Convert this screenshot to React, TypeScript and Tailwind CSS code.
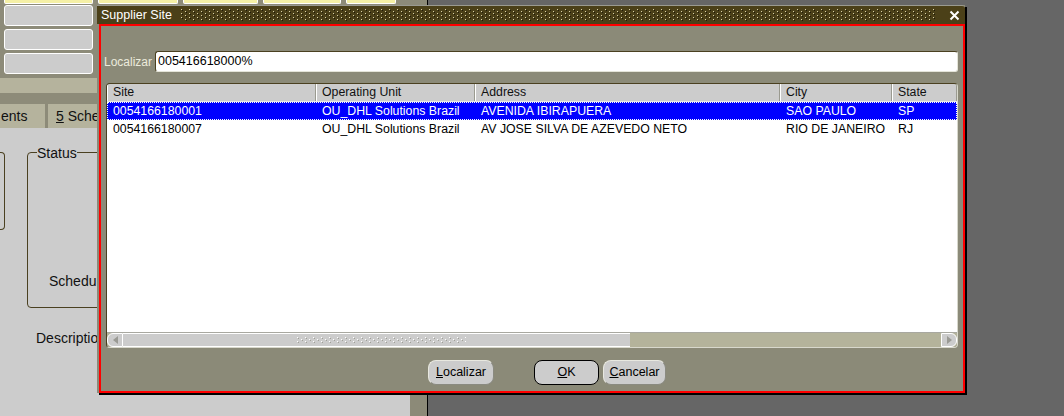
import React from 'react';

const cols = [
  { label: 'Site', w: 'w-[209px]' },
  { label: 'Operating Unit', w: 'w-[159px]' },
  { label: 'Address', w: 'w-[305px]' },
  { label: 'City', w: 'w-[112px]' },
  { label: 'State', w: 'flex-1' },
];

const rows = [
  ['0054166180001', 'OU_DHL Solutions Brazil', 'AVENIDA IBIRAPUERA', 'SAO PAULO', 'SP'],
  ['0054166180007', 'OU_DHL Solutions Brazil', 'AV JOSE SILVA DE AZEVEDO NETO', 'RIO DE JANEIRO', 'RJ'],
];

const Dots: React.FC<{ id: string; light: string; dark: string }> = ({ id, light, dark }) => (
  <svg className="w-full h-full" xmlns="http://www.w3.org/2000/svg">
    <defs>
      <pattern id={id} width="8" height="4" patternUnits="userSpaceOnUse">
        <rect x="1" y="0" width="1" height="1" fill={light} />
        <rect x="2" y="1" width="1" height="1" fill={dark} />
        <rect x="5" y="2" width="1" height="1" fill={light} />
        <rect x="6" y="3" width="1" height="1" fill={dark} />
      </pattern>
    </defs>
    <rect width="100%" height="100%" fill={`url(#${id})`} />
  </svg>
);

const Button: React.FC<{ label: string; mn: number; w: string; primary?: boolean }> = ({ label, mn, w, primary }) => (
  <button
    className={
      'h-[25px] rounded-[8px] bg-[#cccccc] text-[12.5px] text-black flex items-center justify-center ' +
      w +
      (primary ? ' border border-black' : ' border border-[#e8e8e0] border-r-[#8a8a80] border-b-[#8a8a80]')
    }
  >
    {label.slice(0, mn)}
    <span className="underline">{label[mn]}</span>
    {label.slice(mn + 1)}
  </button>
);

export default function App() {
  return (
    <div className="relative w-[1064px] h-[416px] overflow-hidden flex font-['Liberation_Sans',Arial,sans-serif] text-[12px] text-[#111]">
      {/* background form */}
      <div className="w-[410px] flex flex-col bg-[#cccccc]">
        <div className="bg-[#8d8b79] h-[78px] flex flex-col">
          <div className="flex gap-[5px] pl-[4px]">
            <div className="w-[89px] h-[4px] bg-[#f5f0a6] border-x border-b border-white rounded-b-[2px]" />
            <div className="w-[80px] h-[4px] bg-[#f5f0a6] border-x border-b border-white rounded-b-[2px]" />
            <div className="w-[75px] h-[4px] bg-[#f5f0a6] border-x border-b border-white rounded-b-[2px]" />
            <div className="w-[78px] h-[4px] bg-[#f5f0a6] border-x border-b border-white rounded-b-[2px]" />
            <div className="w-[50px] h-[4px] bg-[#f5f0a6] border-x border-b border-white rounded-b-[2px]" />
          </div>
          <div className="flex flex-col gap-[3px] pl-[4px] pt-[1px]">
            <div className="w-[89px] h-[21px] bg-[#cccccc] border border-white rounded-[3px]" />
            <div className="w-[89px] h-[21px] bg-[#cccccc] border border-white rounded-[3px]" />
            <div className="w-[89px] h-[21px] bg-[#cccccc] border border-white rounded-[3px]" />
          </div>
        </div>
        <div className="h-[15px] bg-[#b5b39d]" />
        <div className="h-[11px] bg-[#8d8b79]" />
        <div className="h-[24px] bg-[#b5b39d] flex items-center text-[14px] text-[#111]">
          <span className="w-[45px] pl-[1px]">ents</span>
          <div className="w-[3px] self-stretch bg-[#8d8b79]" />
          <span className="ml-[8px]">
            <span className="underline">5</span> Sche
          </span>
        </div>
        <div className="flex mt-[24px]">
          <div className="w-[6px] h-[78px] -ml-[1px] border-r border-y border-[#4a4020] rounded-r-[4px]" />
          <div className="relative ml-[22px] w-[120px] h-[156px] border border-[#4a4020] rounded-[4px]">
            <span className="absolute -top-[8px] left-[9px] bg-[#cccccc] text-[14px] leading-[16px]">Status</span>
            <span className="absolute top-[120px] left-[21px] text-[14px] leading-[16px]">Schedule</span>
          </div>
        </div>
        <div className="mt-[22px] ml-[36px] text-[14px] leading-[16px]">Description</div>
      </div>
      <div className="w-[17px] bg-[#8c8a78]" />
      <div className="flex-1 bg-[#666666] border-l border-black" />

      {/* dialog window */}
      <div className="absolute left-[97px] top-[5px] w-[868px] h-[388px] flex flex-col bg-[#8b8a78] shadow-[2px_2px_0_0_#000]">
        <div className="h-[19px] flex items-center bg-[#4b4018] rounded-tr-[3px] border-t border-[#9a9a90]">
          <span className="pl-[4px] text-white text-[12.5px] leading-[14px]">Supplier Site</span>
          <div className="flex-1 h-[12px] ml-[8px] mr-[12px]">
            <Dots id="tdots" light="#d8d0a8" dark="#1f1a08" />
          </div>
          <svg width="11" height="11" viewBox="0 0 11 11" className="mr-[5px]">
            <path d="M1.5 1.5 L9.5 9.5 M9.5 1.5 L1.5 9.5" stroke="#ffffff" strokeWidth="2" />
          </svg>
        </div>
        <div className="flex-1 ml-[2px] border-2 border-[#ff0000] flex flex-col">
          <div className="mt-[25px] flex items-center pl-[3px] pr-[5px]">
            <span className="w-[51px] text-[#ecebdc] text-[12px]">Localizar</span>
            <div className="flex-1 h-[21px] bg-white border border-[#4a4020] border-r-[#e4e4d8] border-b-[#e4e4d8] rounded-[3px] flex items-center pl-[2px] text-[12.5px] text-black">
              005416618000%
            </div>
          </div>
          <div className="mt-[11px] mx-[5px] h-[265px] flex flex-col border border-[#4a4020] border-r-[#d8d8cc] border-b-[#d8d8cc] rounded-[4px] overflow-hidden text-[12.3px]">
            <div className="flex h-[18px] bg-[#cccccc] border-b border-[#e8e8e8]">
              {cols.map((c, i) => (
                <div
                  key={i}
                  className={c.w + ' flex items-center pl-[6px] border-r border-[#9a9a90] shadow-[inset_1px_0_0_#ffffff]'}
                >
                  {c.label}
                </div>
              ))}
            </div>
            <div className="flex-1 bg-white">
              {rows.map((r, ri) => (
                <div
                  key={ri}
                  className={
                    'flex h-[18px] ' +
                    (ri === 0 ? 'bg-[#0000ff] text-white outline-1 outline-dotted outline-white -outline-offset-1' : 'text-black')
                  }
                >
                  {r.map((v, ci) => (
                    <div key={ci} className={cols[ci].w + ' flex items-center pl-[6px]'}>
                      {v}
                    </div>
                  ))}
                </div>
              ))}
            </div>
            <div className="h-[15px] flex bg-[#b4b39b] border-t border-[#a8a8a0]">
              <div className="w-[16px] flex items-center justify-center bg-[#cccccc] border border-white rounded-l-[6px]">
                <svg width="5" height="8" viewBox="0 0 5 8">
                  <path d="M5 0 L0 4 L5 8 Z" fill="#9a9a94" />
                </svg>
              </div>
              <div className="w-[507px] bg-[#cccccc] border-y border-white flex items-center pl-[173px]">
                <div className="w-[170px] h-[6px]">
                  <Dots id="sdots" light="#ffffff" dark="#a0a098" />
                </div>
              </div>
              <div className="flex-1" />
              <div className="w-[16px] flex items-center justify-center bg-[#cccccc] border border-white rounded-r-[6px]">
                <svg width="5" height="8" viewBox="0 0 5 8">
                  <path d="M0 0 L5 4 L0 8 Z" fill="#9a9a94" />
                </svg>
              </div>
            </div>
          </div>
          <div className="mt-[12px] flex items-center pl-[327px]">
            <Button label="Localizar" mn={0} w="w-[66px]" />
            <div className="ml-[40px]">
              <Button label="OK" mn={0} w="w-[65px]" primary />
            </div>
            <div className="ml-[4px]">
              <Button label="Cancelar" mn={0} w="w-[63px]" />
            </div>
          </div>
        </div>
      </div>
    </div>
  );
}
